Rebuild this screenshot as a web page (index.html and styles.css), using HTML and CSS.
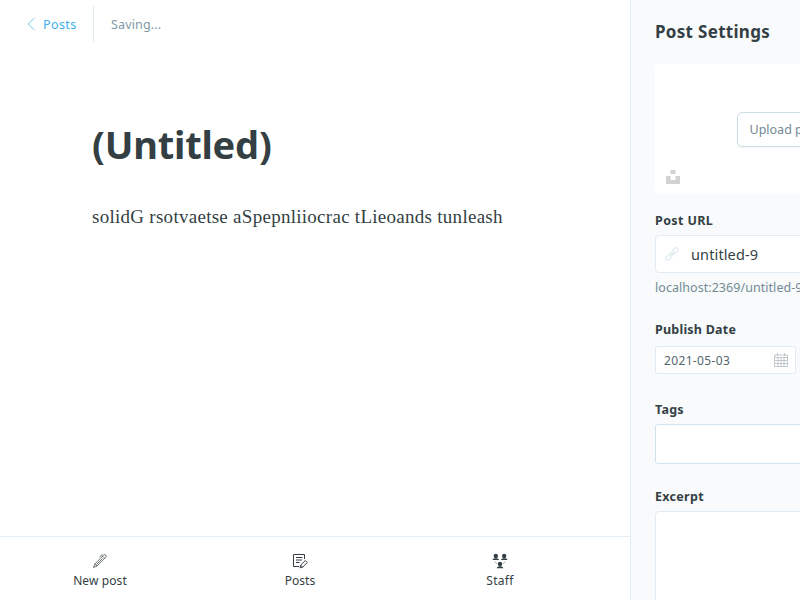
FILE: index.html
```html
<!DOCTYPE html>
<html lang="en">
<head>
<meta charset="utf-8">
<title>Post editor</title>
<link rel="stylesheet" href="styles.css">
</head>
<body>
<div class="app">
  <div class="main">
    <header class="topbar">
      <a class="back">
        <svg class="chevron" width="8" height="14" viewBox="0 0 8 14" fill="none" stroke="currentColor" stroke-width="0.7"><path d="M7.500 1 1 7l6.500 6"/></svg>
        <span>Posts</span>
      </a>
      <span class="status">Saving...</span>
    </header>
    <main class="editor">
      <h1>(Untitled)</h1>
      <p>solidG rsotvaetse aSpepnliiocrac tLieoands tunleash</p>
    </main>
    <nav class="mobile-nav">
      <a class="nav-item">
        <svg width="16" height="16" viewBox="0 0 16 16" fill="none" stroke="currentColor" stroke-width="0.7" stroke-linejoin="round"><path d="M1.500 14.500 2.800 11 10.500 3.200l2.100 2.100L5 13zM2.800 11 5 13M9.800 3.700l1.800-1.800q1.200-.8 2.100.2.900 1 0 2.100l-1.300 1.500M7.500 4 10.500 1.200M4.500 11.500l6-6"/></svg>
        <span class="nav-new">New post</span>
      </a>
      <a class="nav-item">
        <svg width="16" height="16" viewBox="0 0 16 16" fill="none" stroke="currentColor" stroke-width="1" stroke-linejoin="round"><path d="M12.500 6V1.500H1.500v12h5.500M4 4.500h6.500M4 7h6M4 9.500h3.500"/><path d="m8 14.800.7-2.700 4.600-4.600 2 2-4.600 4.600zM8.700 12.100l2 2"/></svg>
        <span class="nav-posts">Posts</span>
      </a>
      <a class="nav-item">
        <svg class="staff-icon" width="16" height="16" viewBox="0 0 16 16" fill="currentColor"><circle cx="3.800" cy="3" r="2.200"/><path d="M.5 7Q.5 5.500 3 5.200h1.600Q7 5.500 7 7z"/><circle cx="12.200" cy="3" r="2.200"/><path d="M9 7Q9 5.500 11.400 5.200H13Q15.500 5.500 15.500 7z"/><circle cx="8" cy="11" r="2.200"/><path d="M4.700 15.300Q4.700 13.500 7.200 13.200h1.600Q11.300 13.500 11.300 15.300z"/><path d="m3 8.700 2 2m8-2-2 2" fill="none" stroke="currentColor" stroke-width=".6"/></svg>
        <span class="nav-staff">Staff</span>
      </a>
    </nav>
  </div>
  <aside class="settings">
    <h2>Post Settings</h2>
    <div class="uploader">
      <button class="upload">Upload post image</button>
      <svg class="unsplash" width="14" height="14" viewBox="0 0 14 14" fill="#d2d2d2"><path d="M4.500 0h5v4h-5zM0 6h4.500v4h5V6H14v8H0z"/></svg>
    </div>
    <label class="l-url">Post URL</label>
    <div class="url-input">
      <svg width="14" height="14" viewBox="0 0 14 14" fill="none" stroke="#cedde5" stroke-width="0.9"><rect x="-3.700" y="-1.900" width="7.400" height="3.800" rx="1.700" transform="translate(4 10) rotate(-45)"/><rect x="-3.700" y="-1.900" width="7.400" height="3.800" rx="1.700" transform="translate(10 4) rotate(-45)"/><path d="m4.500 9.500 5-5"/></svg>
      <span>untitled-9</span>
    </div>
    <p class="url-hint">localhost:2369/untitled-9/</p>
    <label class="l-date">Publish Date</label>
    <div class="date-input">
      <span>2021-05-03</span>
      <svg width="14" height="14" viewBox="0 0 14 14" fill="none" stroke="#b4bcc0" stroke-width="0.8"><path d="M.5 2h13v11.500H.5zM.5 4.500h13M3.500 0v3M10.500 0v3M1 7.500h12M1 10.500h12M4 5v8M7 5v8M10 5v8"/></svg>
    </div>
    <label class="l-tags">Tags</label>
    <div class="tags-input"></div>
    <label class="l-excerpt">Excerpt</label>
    <div class="excerpt-input"></div>
  </aside>
</div>
</body>
</html>
```
FILE: styles.css
```css
* { box-sizing: border-box; }
body {
  margin: 0;
  overflow: hidden;
  background: #fff;
  color: #343f44;
  font-family: "Noto Sans", sans-serif;
  font-size: 12.5px;
}
h1, h2, p { margin: 0; }
svg { display: block; flex: none; }
.app { display: flex; width: 100vw; height: 100vh; overflow: hidden; }
.main { display: flex; flex: none; flex-direction: column; width: 630px; }
.topbar { display: flex; align-items: center; height: 48px; padding-left: 27px; }
.back {
  display: flex;
  align-items: center;
  gap: 8px;
  width: 67px;
  height: 36px;
  border-right: 1px solid #dfe9f0;
  color: #3eb0ef;
  letter-spacing: 0.4px;
}
.status { margin-left: 17px; color: #829aa8; letter-spacing: 0.15px; }
.editor { flex: 1; padding: 68px 92px 0; white-space: nowrap; }
h1 { height: 56px; font-size: 38px; line-height: 56px; font-weight: 700; letter-spacing: -0.2px; }
.editor p {
  margin-top: 29px;
  font: 19px/32px "Liberation Serif", serif;
  letter-spacing: 0.275px;
}
.mobile-nav {
  display: flex;
  height: 64px;
  border-top: 1px solid #e3eef6;
}
.nav-item {
  display: flex;
  flex: none;
  flex-direction: column;
  align-items: center;
  width: 200px;
  padding-top: 16px;
  font-size: 12px;
  line-height: 16px;
}
.nav-item svg { margin-bottom: 4px; }
.nav-new { letter-spacing: 0.1px; }
.nav-staff { letter-spacing: 0.3px; }
.settings {
  display: flex;
  flex: none;
  flex-direction: column;
  width: 350px;
  padding-left: 24px;
  padding-right: 24px;
  border-left: 1px solid #e3eef6;
  background: #f8fafc;
}
.settings > * { flex: none; }
h2 { height: 64px; font-size: 17px; line-height: 63px; font-weight: 700; letter-spacing: 0.3px; }
.uploader {
  display: flex;
  align-items: center;
  justify-content: center;
  position: relative;
  height: 130px;
  border-radius: 4px;
  background: #fff;
}
.upload {
  width: 138px;
  height: 35px;
  padding: 0 12px;
  border: 1px solid #cfdee5;
  border-radius: 5px;
  background: #fff;
  box-shadow: 0 1px 1px #f2f5f7;
  color: #738a94;
  font: 12.5px "Noto Sans", sans-serif;
  text-align: left;
  white-space: nowrap;
}
.unsplash { position: absolute; left: 11px; bottom: 10px; }
label { display: block; height: 17px; font-weight: 700; font-size: 12.5px; line-height: 17px; letter-spacing: 0.22px; }
.l-url { margin-top: 18px; letter-spacing: 0.38px; }
.url-input {
  display: flex;
  align-items: center;
  gap: 12px;
  height: 38px;
  margin-top: 6px;
  padding-left: 9px;
  border: 1px solid #e0ebf3;
  border-radius: 4px;
  background: #fff;
  font-size: 14.5px;
  letter-spacing: 0.12px;
}
.url-hint { height: 17px; margin-top: 6px; color: #738a94; font-size: 12.5px; line-height: 17px; letter-spacing: 0.05px; }
.l-date { margin-top: 25px; }
.date-input {
  display: flex;
  align-items: center;
  justify-content: space-between;
  width: 141px;
  height: 28px;
  margin-top: 8px;
  padding: 0 7px 0 8px;
  border: 1px solid #e0ebf3;
  border-radius: 3px;
  background: #fff;
  color: #54666d;
  font-size: 12px;
  letter-spacing: 0.35px;
}
.l-tags { margin-top: 27px; }
.tags-input { height: 40px; margin-top: 6px; border: 1px solid #d3e2eb; border-radius: 3px; background: #fff; }
.l-excerpt { margin-top: 24px; letter-spacing: 0.3px; }
.excerpt-input { height: 110px; margin-top: 6px; border: 1px solid #e0ebf3; border-radius: 4px; background: #fff; }
```
